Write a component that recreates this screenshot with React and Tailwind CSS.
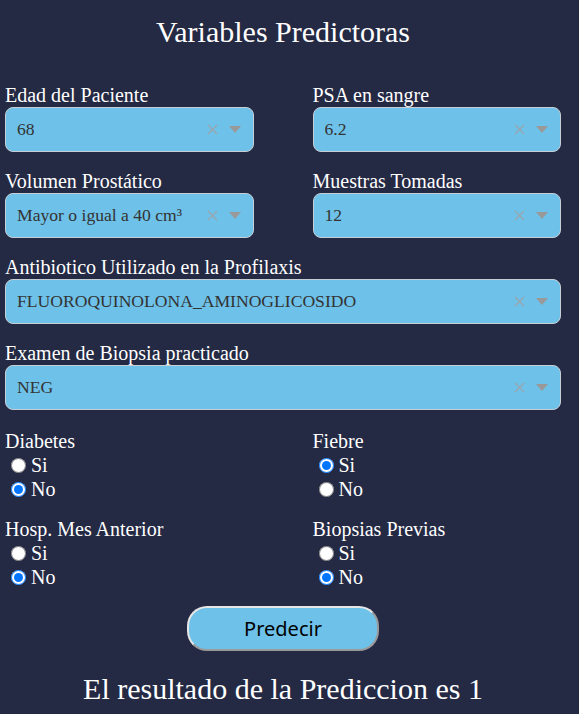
import React from 'react';

const serif = "font-['Liberation_Serif','Times_New_Roman',serif]";

const SelectBox = ({ value }) => (
  <div className="h-[45px] flex items-center rounded-[8px] border border-[#c6ced6] bg-[#6ec1e8] pl-[11px] pr-[12px]">
    <span className={`flex-1 text-[17.6px] text-[#333] truncate ${serif}`}>{value}</span>
    <svg width="11" height="11" viewBox="0 0 11 11" className="mr-[11px]">
      <path d="M1 1 L10 10 M10 1 L1 10" stroke="#9aa6ad" strokeWidth="1.3" fill="none" />
    </svg>
    <span className="w-0 h-0 border-l-[6px] border-r-[6px] border-t-[7px] border-l-transparent border-r-transparent border-t-[#999]" />
  </div>
);

const Field = ({ label, value, full }) => (
  <div className={full ? 'col-span-2' : ''}>
    <div className={`text-[20px] leading-[23px] text-white ${serif}`}>{label}</div>
    <SelectBox value={value} />
  </div>
);

const RadioGroup = ({ label, name, checked }) => (
  <div>
    <div className={`text-[20px] leading-[24px] text-white ${serif}`}>{label}</div>
    {['Si', 'No'].map((opt) => (
      <label key={opt} className={`flex items-center h-[24px] text-[20px] text-white ${serif}`}>
        <input
          type="radio"
          name={name}
          defaultChecked={checked === opt}
          className="ml-[6px] mr-[5px] w-[15px] h-[15px]"
        />
        <span className="leading-[24px] -mt-[1px]">{opt}</span>
      </label>
    ))}
  </div>
);

export default function App() {
  return (
    <div className={`min-h-[714px] bg-[#242944] pl-[5px] pr-[18px] pt-[14px] ${serif}`}>
      <h1 className="text-center text-[30px] leading-[36px] text-white">Variables Predictoras</h1>

      <div className="mt-[34px] grid grid-cols-2 gap-x-[59px] gap-y-[18px]">
        <Field label="Edad del Paciente" value="68" />
        <Field label="PSA en sangre" value="6.2" />
        <Field label="Volumen Prostático" value="Mayor o igual a 40 cm³" />
        <Field label="Muestras Tomadas" value="12" />
        <Field full label="Antibiotico Utilizado en la Profilaxis" value="FLUOROQUINOLONA_AMINOGLICOSIDO" />
        <Field full label="Examen de Biopsia practicado" value="NEG" />
      </div>

      <div className="mt-[19px] grid grid-cols-2 gap-x-[59px] gap-y-[16px]">
        <RadioGroup label="Diabetes" name="diabetes" checked="No" />
        <RadioGroup label="Fiebre" name="fiebre" checked="Si" />
        <RadioGroup label="Hosp. Mes Anterior" name="hosp" checked="No" />
        <RadioGroup label="Biopsias Previas" name="biopsias" checked="No" />
      </div>

      <div className="mt-[17px] flex justify-center">
        <button className="w-[192px] h-[45px] rounded-[20px] border-2 border-t-[#e6e6e6] border-l-[#e6e6e6] border-r-[#9a9a9a] border-b-[#9a9a9a] bg-[#6ec1e8] text-[20px] text-black font-['Noto_Sans','Open_Sans',sans-serif]">
          Predecir
        </button>
      </div>

      <div className="mt-[20px] text-center text-[30px] leading-[36px] text-white">
        El resultado de la Prediccion es 1
      </div>
    </div>
  );
}
